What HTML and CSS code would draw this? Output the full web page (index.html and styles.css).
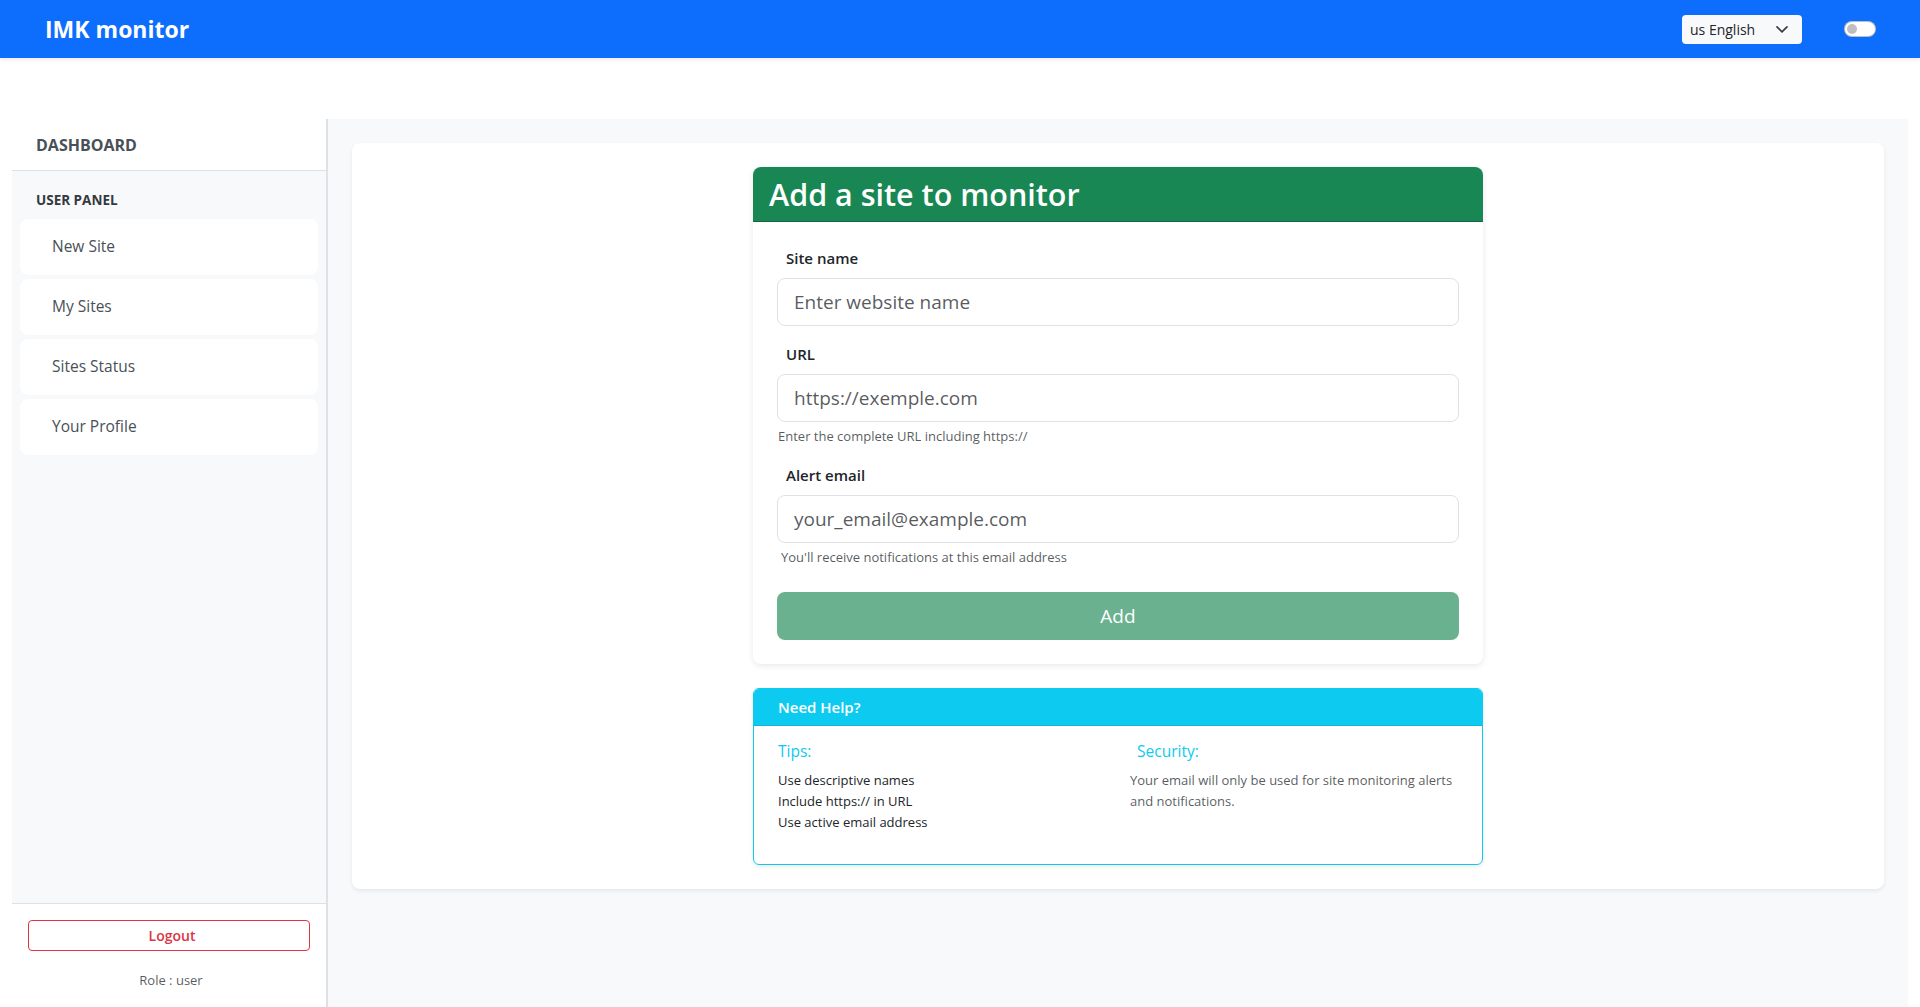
FILE: index.html
```html
<!DOCTYPE html>
<html lang="en">
<head>
<meta charset="utf-8">
<title>IMK monitor</title>
<link rel="stylesheet" href="styles.css">
</head>
<body>
<nav class="navbar">
  <div class="brand">IMK monitor</div>
  <div class="nav-right">
    <div class="lang-select">
      <span>us English</span>
      <svg class="chev" width="14" height="10" viewBox="0 0 16 12" aria-hidden="true"><path d="M2 3.5l6 6 6-6" fill="none" stroke="#343a40" stroke-width="2" stroke-linecap="round" stroke-linejoin="round"/></svg>
    </div>
    <div class="switch"><span class="knob"></span></div>
  </div>
</nav>

<div class="layout">
  <aside class="sidebar">
    <div class="sb-head">DASHBOARD</div>
    <div class="sb-body">
      <div class="sb-section">USER PANEL</div>
      <ul class="sb-nav">
        <li><a href="#">New Site</a></li>
        <li><a href="#">My Sites</a></li>
        <li><a href="#">Sites Status</a></li>
        <li><a href="#">Your Profile</a></li>
      </ul>
    </div>
    <div class="sb-foot">
      <button class="logout" type="button">Logout</button>
      <div class="role">Role : user</div>
    </div>
  </aside>

  <main class="main">
    <div class="panel">
      <div class="form-card">
        <div class="form-head"><h2>Add a site to monitor</h2></div>
        <form class="form-body">
          <div class="group">
            <label class="label" for="name">Site name</label>
            <input class="input" id="name" type="text" placeholder="Enter website name">
          </div>
          <div class="group">
            <label class="label" for="url">URL</label>
            <input class="input" id="url" type="text" placeholder="https://exemple.com">
            <div class="help">Enter the complete URL including https://</div>
          </div>
          <div class="group group-last">
            <label class="label" for="email">Alert email</label>
            <input class="input" id="email" type="text" placeholder="your_email@example.com">
            <div class="help help-indent">You'll receive notifications at this email address</div>
          </div>
          <button class="add-btn" type="button" disabled>Add</button>
        </form>
      </div>

      <div class="help-card">
        <div class="help-head">Need Help?</div>
        <div class="help-body">
          <div class="col">
            <h6 class="help-title">Tips:</h6>
            <ul class="tips">
              <li>Use descriptive names</li>
              <li>Include https:// in URL</li>
              <li>Use active email address</li>
            </ul>
          </div>
          <div class="col">
            <h6 class="help-title help-title-indent">Security:</h6>
            <p class="sec-text">Your email will only be used for site monitoring alerts and notifications.</p>
          </div>
        </div>
      </div>
    </div>
  </main>
</div>
</body>
</html>
```

FILE: styles.css
```css
html, body {
  margin: 0;
  padding: 0;
  height: 100%;
}

body {
  font-family: "Open Sans", "Noto Sans", sans-serif;
  font-size: 16px;
  line-height: 1.5;
  color: #212529;
  background: #fff;
  overflow: hidden;
}

/* Navbar */
.navbar {
  height: 58px;
  box-sizing: border-box;
  background: #0d6efd;
  display: flex;
  align-items: center;
  justify-content: space-between;
  padding: 0 44px 0 45px;
  box-shadow: 0 2px 4px rgba(0, 0, 0, 0.08);
  position: relative;
  z-index: 2;
}

.brand {
  color: #fff;
  font-weight: 700;
  font-size: 23px;
  line-height: 1;
  padding-top: 1px;
}

.nav-right {
  display: flex;
  align-items: center;
  gap: 42px;
}

.lang-select {
  width: 120px;
  height: 29px;
  box-sizing: border-box;
  background: #f8f9fa;
  border-radius: 4px;
  display: flex;
  align-items: center;
  justify-content: space-between;
  padding: 0 13px 0 8px;
  font-size: 14px;
  color: #212529;
}

.chev {
  display: block;
}

.switch {
  width: 32px;
  height: 16px;
  box-sizing: border-box;
  background: #fff;
  border: 1px solid rgba(0, 0, 0, 0.25);
  border-radius: 8px;
  display: flex;
  align-items: center;
  padding-left: 2px;
}

.knob {
  width: 10px;
  height: 10px;
  border-radius: 50%;
  background: #bfbfbf;
}

/* Layout */
.layout {
  display: flex;
  height: calc(100vh - 119px);
  margin-top: 61px;
  padding: 0 12px;
}

/* Sidebar */
.sidebar {
  width: 314px;
  flex: 0 0 314px;
  background: #f8f9fa;
  border-right: 2px solid #dee2e6;
  display: flex;
  flex-direction: column;
}

.sb-head {
  height: 52px;
  box-sizing: border-box;
  background: #fff;
  border-bottom: 1px solid #dee2e6;
  padding-left: 24px;
  display: flex;
  align-items: center;
  font-weight: 700;
  font-size: 16px;
  color: #495057;
}

.sb-body {
  flex: 1;
}

.sb-section {
  padding: 19px 0 0 24px;
  margin-bottom: 9px;
  font-size: 13.5px;
  line-height: 20px;
  font-weight: 700;
  color: #343a40;
}

.sb-nav {
  list-style: none;
  margin: 0;
  padding: 0 8px;
}

.sb-nav li {
  margin-bottom: 4px;
}

.sb-nav a {
  display: flex;
  align-items: center;
  height: 56px;
  padding-left: 32px;
  background: #fff;
  border-radius: 8px;
  color: #495057;
  font-weight: 500;
  font-size: 15.5px;
  text-decoration: none;
}

.sb-foot {
  background: #fff;
  border-top: 1px solid #dee2e6;
  padding: 16px 16px 16px;
}

.logout {
  display: block;
  width: 100%;
  height: 31px;
  box-sizing: border-box;
  background: #fff;
  border: 1px solid #dc3545;
  border-radius: 4px;
  color: #dc3545;
  font-family: inherit;
  font-weight: 600;
  font-size: 14px;
  padding: 0 0 0 6px;
}

.role {
  margin-top: 19px;
  padding-left: 4px;
  text-align: center;
  font-size: 13px;
  line-height: 21px;
  color: rgba(33, 37, 41, 0.75);
}

/* Main */
.main {
  flex: 1;
  background: #f8f9fa;
  padding: 24px;
  overflow: hidden;
}

.panel {
  background: #fff;
  border-radius: 8px;
  box-shadow: 0 2px 4px rgba(0, 0, 0, 0.075);
  padding: 24px;
}

.form-card {
  width: 730px;
  margin: 0 auto;
  background: #fff;
  border-radius: 8px;
  box-shadow: 0 2px 6px rgba(0, 0, 0, 0.09);
  overflow: hidden;
}

.form-head {
  background: #198754;
  border-bottom: 1px solid #13653f;
  padding: 8px 16px;
}

.form-head h2 {
  margin: 0;
  color: #fff;
  font-size: 30.5px;
  font-weight: 600;
  line-height: 38.4px;
}

.form-body {
  padding: 24px;
  margin: 0;
}

.group {
  margin-bottom: 16px;
}

.group-last {
  margin-bottom: 24px;
}

.label {
  display: block;
  padding-left: 9px;
  margin-bottom: 8px;
  font-weight: 600;
  font-size: 15px;
  line-height: 24px;
  color: #212529;
}

.input {
  display: block;
  width: 100%;
  height: 48px;
  box-sizing: border-box;
  border: 1px solid #dee2e6;
  border-radius: 8px;
  padding: 0 16px;
  font-family: inherit;
  font-size: 19px;
  color: #212529;
  background: #fff;
}

.input::placeholder {
  color: rgba(33, 37, 41, 0.75);
  opacity: 1;
}

.help {
  margin-top: 4px;
  padding-left: 1px;
  font-size: 13px;
  line-height: 21px;
  color: rgba(33, 37, 41, 0.75);
}

.help-indent {
  padding-left: 4px;
}

.add-btn {
  display: block;
  width: 100%;
  height: 48px;
  border: 0;
  border-radius: 8px;
  background: #6ab190;
  color: #fff;
  font-family: inherit;
  font-size: 19px;
}

/* Help card */
.help-card {
  width: 730px;
  box-sizing: border-box;
  margin: 24px auto 0;
  border: 1px solid #0dcaf0;
  border-radius: 6px;
  box-shadow: 0 2px 4px rgba(0, 0, 0, 0.075);
  overflow: hidden;
}

.help-head {
  background: #0dcaf0;
  color: #fff;
  font-weight: 600;
  font-size: 15px;
  line-height: 24px;
  padding: 6px 24px 6px;
  border-bottom: 1px solid #0bb8db;
}

.help-body {
  display: flex;
  padding: 16px 12px 15px;
}

.col {
  flex: 1 1 0;
  padding: 0 12px;
}

.help-title {
  margin: 0 0 9px;
  font-size: 15.5px;
  font-weight: 500;
  line-height: 19px;
  color: #0dcaf0;
}

.help-title-indent {
  padding-left: 7px;
}

.tips {
  list-style: none;
  margin: 0 0 16px;
  padding: 0;
  font-size: 13px;
  line-height: 21px;
  color: #212529;
}

.sec-text {
  margin: 0 0 16px;
  font-size: 13px;
  line-height: 21px;
  color: rgba(33, 37, 41, 0.75);
}
```
